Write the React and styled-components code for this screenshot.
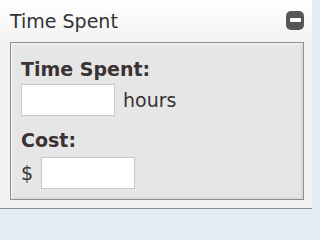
import React from "react";
import styled, { createGlobalStyle } from "styled-components";

const GlobalStyle = createGlobalStyle`
  html, body {
    margin: 0;
    padding: 0;
    background: #e3ebf3;
  }
  body {
    font-family: "DejaVu Sans", Verdana, sans-serif;
    color: #333;
  }
`;

const Panel = styled.div`
  width: 312px;
  background: #f2f2f2;
  border-bottom: 1px solid #8c8c8c;
`;

const Header = styled.div`
  height: 42px;
  display: flex;
  align-items: center;
  justify-content: space-between;
  padding: 0 8px 0 10px;
  box-sizing: border-box;
  background: linear-gradient(#ffffff, #f2f2f2);
`;

const Title = styled.h2`
  margin: 0;
  font-size: 19px;
  line-height: 22px;
  font-weight: normal;
  color: #333;
  padding-bottom: 1px;
`;

const Collapse = styled.button`
  width: 18px;
  height: 19px;
  border: 0;
  padding: 0;
  border-radius: 5px;
  background: #565656;
  display: flex;
  align-items: center;
  justify-content: center;
  margin-bottom: 2px;
  cursor: pointer;

  &::after {
    content: "";
    width: 11px;
    height: 4px;
    border-radius: 1px;
    background: #fff;
  }
`;

const Body = styled.div`
  padding: 0 8px 8px 10px;
`;

const Box = styled.div`
  border: 1px solid #8e8e8e;
  background: #e6e6e6;
  box-shadow: inset 1px 1px 2px #fafafa, inset -2px -1px 2px #d6d6d6;
  padding: 15px 10px 10px 10px;
`;

const Label = styled.div`
  font-weight: bold;
  font-size: 19px;
  color: #3b3333;
  line-height: 22px;
  margin-top: ${p => (p.$gap ? "13px" : "0")};
`;

const Row = styled.div`
  display: flex;
  align-items: center;
  gap: 8px;
  margin-top: ${p => (p.$gap ? "6px" : "4px")};
  font-size: 19px;
  line-height: 22px;
  color: #333;
`;

const Input = styled.input`
  width: 94px;
  height: 32px;
  box-sizing: border-box;
  border: 1px solid #c8c8c8;
  background: #fff;
  margin: 0;
`;

export default function App() {
  return (
    <>
      <GlobalStyle />
      <Panel>
        <Header>
          <Title>Time Spent</Title>
          <Collapse aria-label="Collapse" />
        </Header>
        <Body>
          <Box>
            <Label>Time Spent:</Label>
            <Row>
              <Input type="text" />
              <span>hours</span>
            </Row>
            <Label $gap>Cost:</Label>
            <Row $gap>
              <span>$</span>
              <Input type="text" />
            </Row>
          </Box>
        </Body>
      </Panel>
    </>
  );
}
